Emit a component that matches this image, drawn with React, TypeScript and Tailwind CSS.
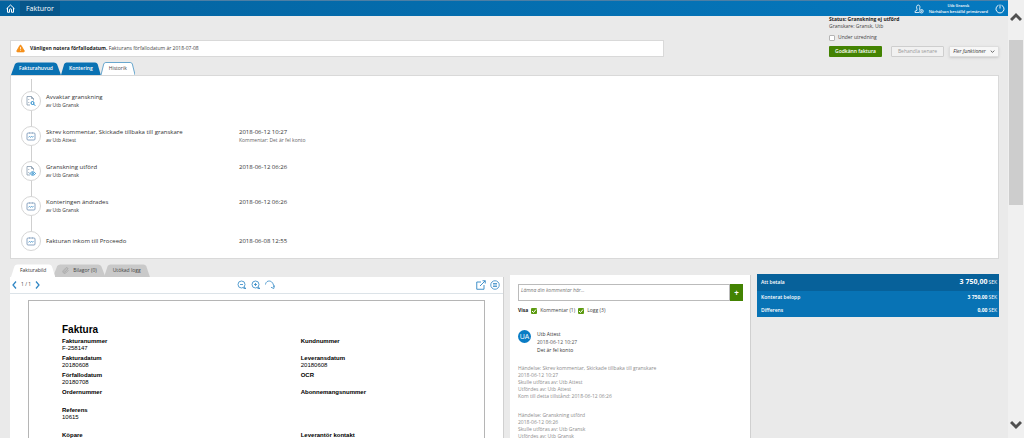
import React from 'react';
import { AlertTriangle, Paperclip } from 'lucide-react';
import { clsx } from 'clsx';

type IconKind = 'search' | 'calendar' | 'eye';

interface HistoryEvent {
  icon: IconKind;
  title: string;
  by?: string;
  date?: string;
  comment?: string;
}

const HISTORY: HistoryEvent[] = [
  { icon: 'search', title: 'Avvaktar granskning', by: 'av Utb Gransk' },
  {
    icon: 'calendar',
    title: 'Skrev kommentar, Skickade tillbaka till granskare',
    by: 'av Utb Attest',
    date: '2018-06-12 10:27',
    comment: 'Kommentar: Det är fel konto',
  },
  { icon: 'eye', title: 'Granskning utförd', by: 'av Utb Gransk', date: '2018-06-12 06:26' },
  { icon: 'calendar', title: 'Konteringen ändrades', by: 'av Utb Gransk', date: '2018-06-12 06:26' },
  { icon: 'calendar', title: 'Fakturan inkom till Proceedo', date: '2018-06-08 12:55' },
];

const INVOICE_ROWS = [
  { height: 'h-[17px]', left: ['Fakturanummer', 'F-258147'], right: ['Kundnummer', ''] },
  { height: 'h-[17px]', left: ['Fakturadatum', '20180608'], right: ['Leveransdatum', '20180608'] },
  { height: 'h-[17px]', left: ['Förfallodatum', '20180708'], right: ['OCR', ''] },
  { height: 'h-[18px]', left: ['Ordernummer', ''], right: ['Abonnemangsnummer', ''] },
  { height: 'h-[25px]', left: ['Referens', '10615'], right: ['', ''] },
  { height: 'h-[17px]', left: ['Köpare', ''], right: ['Leverantör kontakt', ''] },
];

const LOG = [
  {
    title: 'Händelse: Skrev kommentar, Skickade tillbaka till granskare',
    lines: [
      '2018-06-12 10:27',
      'Skulle utföras av: Utb Attest',
      'Utfördes av: Utb Attest',
      'Kom till detta tillstånd: 2018-06-12 06:26',
    ],
  },
  {
    title: 'Händelse: Granskning utförd',
    lines: ['2018-06-12 06:26', 'Skulle utföras av: Utb Gransk', 'Utfördes av: Utb Gransk'],
  },
];

const HomeIcon = () => (
  <svg viewBox="0 0 18 18" className="size-[9px]" fill="none" stroke="currentColor" strokeWidth="2">
    <path d="M1 9.5 9 2l8 7.5M3 8v8.5h4V11.5a2 2 0 0 1 4 0v5h4V8" strokeLinejoin="round" />
  </svg>
);

const UserIcon = () => (
  <svg viewBox="0 0 20 20" className="size-[10px]" fill="none" stroke="currentColor" strokeWidth="1.6">
    <path d="M11 17H2v-2.5l4-2V10C4.5 8 4.5 2 8.5 2s4 6 2.500 8v1.500" />
    <circle cx="15" cy="14.500" r="3.500" />
    <path d="M15 12.500v4M13 14.500h4" strokeWidth="1" />
  </svg>
);

const PowerIcon = () => (
  <svg viewBox="0 0 20 20" className="size-[10px]" fill="none" stroke="currentColor" strokeWidth="1.8">
    <path d="M7 2.500a8 8 0 1 0 6 0M10 1v8" />
  </svg>
);

function EventIcon({ kind }: { kind: IconKind }) {
  if (kind === 'calendar') {
    return (
      <svg viewBox="0 0 20 20" className="size-[10px]" fill="none" stroke="#7191b3" strokeWidth="1.6">
        <path d="M5 4H4Q2 4 2 6v10q0 2 2 2h12q2 0 2-2V6q0-2-2-2h-1M8 4h4M6.500 2v4M13.500 2v4" />
        <path d="M5 12.500l2-1.500 2 1.500 2-1.500 2 1 2-1" stroke="#2f86c4" />
      </svg>
    );
  }
  return (
    <svg viewBox="0 0 20 20" className="size-[10px]" fill="none" stroke="#7f93a8" strokeWidth="1.5">
      <path d="M8 18H2V1h9l4 4v4M11 1v4h4M5.500 6v2M5.500 12v2" />
      {kind === 'search' ? (
        <g stroke="#1f86c8" strokeWidth="2">
          <circle cx="13" cy="14" r="3" />
          <path d="m15 16 3.500 3.500" />
        </g>
      ) : (
        <g stroke="#1f86c8" strokeWidth="1.8">
          <path d="M8 15c3-4.500 8-4.500 11 0-3 4.500-8 4.500-11 0Z" />
          <circle cx="13.500" cy="15" r="1.500" />
        </g>
      )}
    </svg>
  );
}

function Tab({ variant, children }: { variant: 'blue' | 'white' | 'plain' | 'gray'; children: React.ReactNode }) {
  return (
    <button
      role="tab"
      aria-selected={variant === 'white' || variant === 'plain'}
      className={clsx(
        'relative h-[13px] text-[5px] leading-[13px] whitespace-nowrap',
        variant === 'blue' && 'px-2 text-white font-semibold',
        variant === 'white' && 'px-2 text-[#444]',
        variant === 'plain' && 'z-10 px-[9px] text-[#333]',
        variant === 'gray' && '-ml-[2px] px-[9px] text-[#444]',
      )}
    >
      <svg viewBox="0 0 50 13" preserveAspectRatio="none" className="absolute inset-0 size-full" aria-hidden="true">
        <path
          d="M0 13 4 2Q5 .5 7 .5H43Q45 .5 46 2L50 13"
          className={clsx(
            variant === 'blue' && 'fill-[#0a72b3]',
            variant === 'white' && 'fill-white stroke-[#4e97c6]',
            variant === 'plain' && 'fill-white',
            variant === 'gray' && 'fill-[#c9c9c9]',
          )}
        />
      </svg>
      <span className="relative flex items-center gap-1">{children}</span>
    </button>
  );
}

const TopBar = () => (
  <header className="flex h-4 shrink-0 items-stretch border-t border-[#4d7fa5] bg-linear-to-r from-[#04639f] to-[#0579bf] text-white">
    <a href="#" aria-label="Hem" className="flex w-5 items-center justify-center">
      <HomeIcon />
    </a>
    <a href="#" className="flex items-center bg-[#07568a] px-[6px] pt-[1px] text-[7px]">
      Fakturor
    </a>
    <div className="ml-auto flex items-center gap-[5px] pr-[3px]">
      <UserIcon />
      <div className="text-center text-[4px] leading-[6px] font-semibold">
        <p>Utb Gransk</p>
        <p>Närhälsan beställd primärvård</p>
      </div>
      <button aria-label="Logga ut" className="ml-[2px]">
        <PowerIcon />
      </button>
    </div>
  </header>
);

const StatusBox = () => (
  <div className="w-[170px] text-[5px] text-[#444]">
    <p className="leading-[7px] font-bold text-[#222]">Status: Granskning ej utförd</p>
    <p className="leading-[7px]">Granskare: Gransk, Utb</p>
    <label className="mt-[4px] flex items-center gap-[3px] leading-[7px]">
      <input type="checkbox" className="size-[6px] appearance-none rounded-[1px] border border-[#b5b5b5] bg-white" />
      Under utredning
    </label>
    <div className="mt-[5px] flex items-center">
      <button className="h-[11px] w-[53px] rounded-[1px] bg-[#438302] font-semibold text-white">
        Godkänn faktura
      </button>
      <button className="ml-[9px] h-[11px] w-[53px] rounded-[1px] border border-[#cecece] bg-[#f1f1f1] text-[#9a9a9a]">
        Behandla senare
      </button>
      <button className="ml-[5px] flex h-[11px] w-[50px] items-center justify-center gap-1 rounded-[1px] border border-[#ddd] bg-[#f7f7f7] text-[#333] italic shadow-sm">
        Fler funktioner
        <svg viewBox="0 0 8 5" className="h-[3px] w-[5px]" fill="none" stroke="#555" strokeWidth="1.5">
          <path d="m1 1 3 3 3-3" />
        </svg>
      </button>
    </div>
  </div>
);

const HistoryPanel = () => (
  <section className="border border-[#d9d9d9] bg-white pt-[7px] pl-[10px]">
    <ul className="relative">
      <li aria-hidden="true" className="absolute top-[-4px] bottom-[20px] left-[10px] w-px bg-[#cfcfcf]" />
      {HISTORY.map((event, i) => (
        <li key={i} className="flex h-[35px] items-center">
          <span className="relative flex size-5 shrink-0 items-center justify-center rounded-full border border-[#d6d6d6] bg-white">
            <EventIcon kind={event.icon} />
          </span>
          <div className="ml-[5px] w-[193px] text-[#333]">
            <p className="text-[6px] leading-[10px]">{event.title}</p>
            {event.by && <p className="text-[5px] leading-[7px]">{event.by}</p>}
          </div>
          {event.date && (
            <div className="text-[#333]">
              <p className="text-[6px] leading-[10px]">{event.date}</p>
              {event.by && <p className="h-[7px] text-[5px] leading-[7px] text-[#666]">{event.comment}</p>}
            </div>
          )}
        </li>
      ))}
    </ul>
  </section>
);

const Field = ({ pair }: { pair: string[] }) => (
  <div>
    <dt className="font-bold">{pair[0]}</dt>
    <dd>{pair[1]}</dd>
  </div>
);

const InvoiceViewer = () => (
  <section>
    <div role="tablist" className="flex pl-[1px]">
      <Tab variant="plain">Fakturabild</Tab>
      <Tab variant="gray">
        <Paperclip className="size-[7px] text-[#999]" />
        Bilagor (0)
      </Tab>
      <Tab variant="gray">Utökad logg</Tab>
    </div>
    <div className="border-r border-[#d0d0d0] bg-white">
      <div className="flex h-[17px] items-center border-b border-[#dce3e8] text-[#2f86c4]">
        <div className="flex flex-1 items-center pl-[2px]">
          <button aria-label="Föregående sida">
            <svg viewBox="0 0 10 16" className="h-2 w-[5px]" fill="none" stroke="currentColor" strokeWidth="2.5">
              <path d="M8 1 2 8l6 7" />
            </svg>
          </button>
          <span className="px-[4px] text-[5px] text-[#444]">1 / 1</span>
          <button aria-label="Nästa sida">
            <svg viewBox="0 0 10 16" className="h-2 w-[5px]" fill="none" stroke="currentColor" strokeWidth="2.5">
              <path d="m2 1 6 7-6 7" />
            </svg>
          </button>
        </div>
        <div className="flex items-center gap-[4px]">
          <button aria-label="Zooma ut">
            <svg viewBox="0 0 20 20" className="size-[10px]" fill="none" stroke="currentColor" strokeWidth="1.6">
              <circle cx="9" cy="9" r="7" />
              <path d="M6 9h6M13 17h5M14 14l4 3" />
            </svg>
          </button>
          <button aria-label="Zooma in">
            <svg viewBox="0 0 20 20" className="size-[10px]" fill="none" stroke="currentColor" strokeWidth="1.6">
              <circle cx="9" cy="9" r="7" />
              <path d="M6 9h6M9 6v6M13 17h5M14 14l4 3" />
            </svg>
          </button>
          <button aria-label="Rotera">
            <svg viewBox="0 0 20 20" className="size-[10px]" fill="none" stroke="currentColor" strokeWidth="1.6">
              <path d="M1 9C2-1 17-1 17.500 14M12 14.500l5.500 2.500 1.500-6" />
            </svg>
          </button>
        </div>
        <div className="flex flex-1 items-center justify-end gap-[4px] pr-[3px]">
          <button aria-label="Öppna i nytt fönster">
            <svg viewBox="0 0 20 20" className="size-[10px]" fill="none" stroke="currentColor" strokeWidth="1.8">
              <path d="M10 4H1.500v14.500H16V10M8 12 18.500 1.500M13 1.500h5.500V7" />
            </svg>
          </button>
          <button aria-label="Visa lista">
            <svg viewBox="0 0 20 20" className="size-[10px]" fill="none" stroke="currentColor" strokeWidth="1.6">
              <circle cx="10" cy="10" r="8.500" />
              <path d="M6 7h8M6 10h8M6 13h8" />
            </svg>
          </button>
        </div>
      </div>
      <div className="px-[18px] pt-[6px]">
        <article className="border border-b-0 border-[#b5b5b5] pt-[22px] pl-[33px] font-['Liberation_Sans',Arial,sans-serif] text-[6px] leading-[7px] text-black">
          <h1 className="mb-px text-[10px] leading-[14px] font-bold">Faktura</h1>
          {INVOICE_ROWS.map((row, i) => (
            <dl key={i} className={clsx('grid grid-cols-[56fr_43fr]', row.height)}>
              <Field pair={row.left} />
              <Field pair={row.right} />
            </dl>
          ))}
        </article>
      </div>
    </div>
  </section>
);

const FilterBox = ({ label }: { label: string }) => (
  <label className="flex items-center gap-[3px]">
    <span className="relative flex size-[6px]">
      <input type="checkbox" defaultChecked className="size-[6px] appearance-none rounded-[1px] checked:bg-[#5c9a10]" />
      <svg viewBox="0 0 6 6" className="pointer-events-none absolute inset-0" fill="none" stroke="white">
        <path d="m1 3 1.500 1.500L5 1.500" />
      </svg>
    </span>
    {label}
  </label>
);

const CommentPanel = () => (
  <section className="mt-[11px] border-r border-[#d0d0d0] bg-white pt-[9px] pr-[7px] pl-2 text-[5px] text-[#444]">
    <form className="flex h-[17px]">
      <textarea
        aria-label="Kommentar"
        placeholder="Lämna din kommentar här..."
        className="min-w-0 flex-1 resize-none border border-[#bbb] px-[2px] pt-[2px] leading-[7px] italic placeholder:text-[#777]"
      />
      <button type="button" aria-label="Lägg till" className="w-[13px] bg-[#438302] text-[8px] font-bold text-white">
        +
      </button>
    </form>
    <div className="mt-[6px] flex items-center gap-[3px] leading-[7px]">
      <b className="text-[#222]">Visa</b>
      <FilterBox label="Kommentar (1)" />
      <FilterBox label="Logg (3)" />
    </div>
    <div className="mt-[16px] flex gap-[6px] leading-[8px] text-[#333]">
      <span className="flex size-[13px] items-center justify-center rounded-full bg-[#0a7cc4] text-[7px] text-white">
        UA
      </span>
      <div>
        <p>Utb Attest</p>
        <p className="text-[#555]">2018-06-12 10:27</p>
        <p>Det är fel konto</p>
      </div>
    </div>
    {LOG.map((entry) => (
      <div key={entry.title} className="mt-[10px] mb-[11px] leading-[7px] text-[#8c8c8c]">
        <p className="leading-[8px]">{entry.title}</p>
        {entry.lines.map((line) => (
          <p key={line}>{line}</p>
        ))}
      </div>
    ))}
  </section>
);

const Amount = ({ value, large }: { value: string; large?: boolean }) => (
  <dd className="flex items-baseline gap-[1px]">
    <b className={clsx(large && 'text-[7px]')}>{value}</b>
    <span>SEK</span>
  </dd>
);

const TotalsPanel = () => (
  <dl className="mt-[10px] self-start bg-[#0873b5] text-[5px] text-white">
    <div className="flex h-[17px] items-center justify-between bg-[#07619a] pr-[2px] pl-[4px]">
      <dt className="font-semibold">Att betala</dt>
      <Amount value="3 750,00" large />
    </div>
    <div className="flex h-[13px] items-center justify-between pr-[2px] pl-[4px]">
      <dt className="font-semibold">Konterat belopp</dt>
      <Amount value="3 750,00" />
    </div>
    <div className="flex h-[13px] items-center justify-between pr-[2px] pl-[4px]">
      <dt className="font-semibold">Differens</dt>
      <Amount value="0,00" />
    </div>
  </dl>
);

const ScrollArrow = ({ down }: { down?: boolean }) => (
  <svg viewBox="0 0 12 10" className="h-[10px] w-3" fill="none" stroke="#505050" strokeWidth="3">
    <path d={down ? 'm1 2 5 5 5-5' : 'm1 8 5-5 5 5'} />
  </svg>
);

export default function App() {
  return (
    <div className="flex h-screen overflow-hidden bg-[#eaeaea] font-['Open_Sans','Noto_Sans',sans-serif]">
      <div className="flex min-w-0 flex-1 flex-col overflow-hidden">
        <TopBar />
        <main className="min-h-0 flex-1 overflow-hidden pr-[9px] pl-[10px]">
          <div className="flex justify-between">
            <div className="flex w-[654px] flex-col justify-between pt-6">
              <div className="flex h-[17px] items-center gap-[5px] border border-[#d9d9d9] bg-white px-[5px] text-[5px] text-[#444]">
                <AlertTriangle className="size-[9px] fill-[#f7931e] text-[#f28a12] [&>path:not(:first-child)]:stroke-white" />
                <p>
                  <b className="text-[#222]">Vänligen notera förfallodatum.</b> Fakturans förfallodatum är 2018-07-08
                </p>
              </div>
              <div role="tablist" className="mt-[5px] flex pl-[1px]">
                <Tab variant="blue">Fakturahuvud</Tab>
                <Tab variant="blue">Kontering</Tab>
                <Tab variant="white">Historik</Tab>
              </div>
            </div>
            <StatusBox />
          </div>
          <HistoryPanel />
          <div className="mt-[5px] grid grid-cols-[494fr_241fr_242fr] gap-[6px]">
            <InvoiceViewer />
            <CommentPanel />
            <TotalsPanel />
          </div>
        </main>
      </div>
      <aside aria-hidden="true" className="flex w-4 shrink-0 flex-col items-center bg-[#f0f0f0] pt-3 pb-2">
        <ScrollArrow />
        <div className="mt-[18px] h-[165px] w-[14px] bg-[#cdcdcd]" />
        <div className="flex-1" />
        <ScrollArrow down />
      </aside>
    </div>
  );
}
